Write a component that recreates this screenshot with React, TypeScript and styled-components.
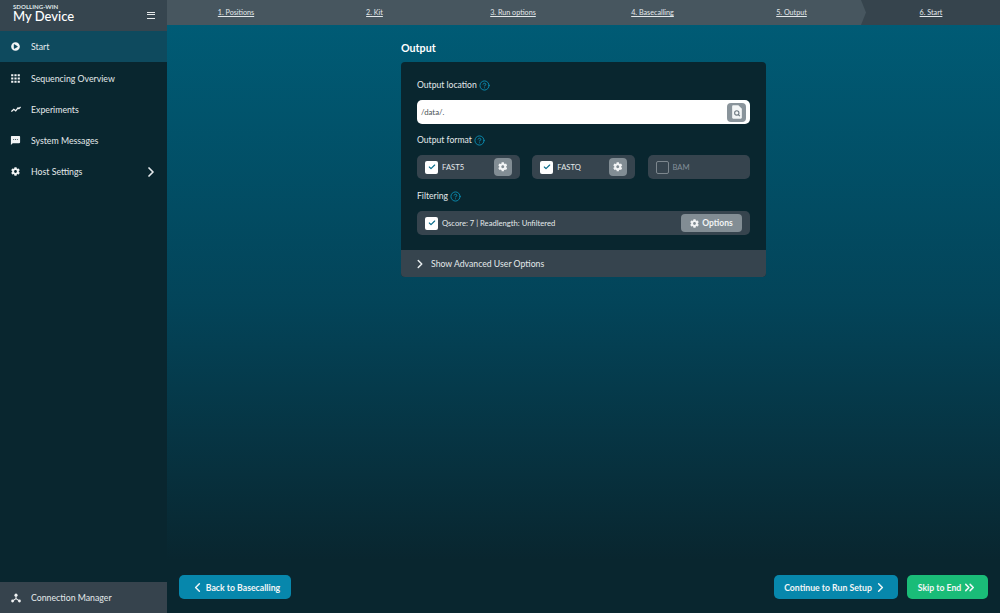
import styled, { createGlobalStyle } from "styled-components";
import { ChevronLeft, ChevronRight, ChevronsRight, CircleHelp, Check } from "lucide-react";
import { FaCog, FaPlayCircle } from "react-icons/fa";
import { MdApps, MdSms } from "react-icons/md";

const GlobalStyle = createGlobalStyle`
  html, body, #root {
    margin: 0;
    height: 100%;
  }
  body {
    font-family: Lato, "Open Sans", sans-serif;
    color: #e8edef;
    background: #09262f;
    overflow: hidden;
  }
  * { box-sizing: border-box; }
`;

const Page = styled.div`
  display: flex;
  width: 1000px;
  height: 613px;
`;

const Sidebar = styled.aside`
  width: 167px;
  flex: none;
  display: flex;
  flex-direction: column;
  background: #09262f;
`;

const DeviceHeader = styled.div`
  height: 31px;
  flex: none;
  display: flex;
  align-items: center;
  justify-content: space-between;
  padding: 0 12px 0 13px;
  background: #36454f;
`;

const DeviceName = styled.div`
  display: flex;
  flex-direction: column;
  margin-top: -5px;
  color: #fff;
  font-size: 13px;
  font-weight: 500;
  line-height: 13px;
  span {
    font-size: 6.1px;
    font-weight: 700;
    line-height: 7px;
    color: #dfe4e6;
  }
`;

const Burger = styled.div`
  position: relative;
  width: 8px;
  height: 7px;
  border-top: 1.5px solid #e6e9eb;
  border-bottom: 1.5px solid #e6e9eb;
  &::after {
    content: "";
    position: absolute;
    left: 0;
    right: 0;
    top: 1.3px;
    border-top: 1.5px solid #e6e9eb;
  }
`;

const NavItem = styled.div<{ $active?: boolean }>`
  height: 31.25px;
  flex: none;
  display: flex;
  align-items: center;
  padding: 0.5px 12px 0 11px;
  font-size: 8.75px;
  color: #e4e9eb;
  background: ${(p) => (p.$active ? "#0e4a5e" : "transparent")};
`;

const NavIcon = styled.span`
  width: 9px;
  height: 9px;
  flex: none;
  display: flex;
  align-items: center;
  justify-content: center;
  color: #f2f4f5;
  svg {
    flex: none;
  }
`;

const NavLabel = styled.span`
  margin-left: 11px;
  flex: 1;
`;

const NavChevron = styled(ChevronRight)`
  margin-right: -4px;
`;

const NavFooter = styled(NavItem)`
  margin-top: auto;
  height: 31px;
  background: #36434d;
`;

const Content = styled.main`
  flex: 1;
  min-width: 0;
  display: flex;
  flex-direction: column;
`;

const StepBar = styled.nav`
  height: 25px;
  flex: none;
  display: flex;
  background: #36444d;
`;

const Steps = styled.div`
  width: 699px;
  flex: none;
  display: flex;
  background: #47565f;
  clip-path: polygon(0 0, 694px 0, 699px 12.5px, 694px 25px, 0 25px);
`;

const Step = styled.a<{ $w: number }>`
  width: ${(p) => p.$w}px;
  flex: none;
  display: flex;
  justify-content: center;
  align-items: center;
  font-size: 7.2px;
  color: #e3e8ea;
  text-decoration: underline;
`;

const Body = styled.div`
  flex: 1;
  padding: 16px 234px 0;
  background: linear-gradient(180deg, #005b75 0%, #034459 52%, #09262f 100%);
`;

const Title = styled.h1`
  margin: 0 0 7px;
  height: 14px;
  font-size: 10.7px;
  line-height: 14px;
  font-weight: 700;
  color: #fff;
`;

const Card = styled.section`
  width: 365px;
  background: #09262f;
  border-radius: 4px;
  overflow: hidden;
`;

const CardBody = styled.div`
  padding: 16px 16px 15px;
  display: flex;
  flex-direction: column;
`;

const Label = styled.div<{ $mt?: number }>`
  display: flex;
  align-items: center;
  gap: 2px;
  height: 14px;
  margin-top: ${(p) => p.$mt ?? 0}px;
  margin-bottom: 8px;
  font-size: 8.6px;
  color: #e4e9eb;
  svg {
    width: 11px;
    height: 11px;
    color: #0b8fb5;
  }
`;

const PathInput = styled.div`
  height: 24px;
  display: flex;
  align-items: center;
  justify-content: space-between;
  padding: 0 4px;
  background: #fff;
  border-radius: 5px;
  font-size: 7.8px;
  color: #4a5257;
`;

const FileButton = styled.div`
  width: 19px;
  height: 19px;
  display: flex;
  align-items: center;
  justify-content: center;
  background: #8a949b;
  border-radius: 4px;
  svg {
    width: 12px;
    height: 14px;
  }
`;

const FormatRow = styled.div`
  display: grid;
  grid-template-columns: 102.5px 102.5px 102.5px;
  justify-content: space-between;
`;

const Tile = styled.div`
  height: 24px;
  display: flex;
  align-items: center;
  padding: 0 8px;
  background: #36444e;
  border-radius: 5px;
  font-size: 7.65px;
  color: #e4e9eb;
`;

const CheckBox = styled.div<{ $off?: boolean }>`
  width: 13px;
  height: 13px;
  flex: none;
  display: flex;
  align-items: center;
  justify-content: center;
  margin-right: 4px;
  border-radius: 2px;
  background: ${(p) => (p.$off ? "transparent" : "#fff")};
  border: ${(p) => (p.$off ? "1px solid #7d878e" : "none")};
  color: #0a6d8c;
  svg {
    width: 8px;
    height: 8px;
  }
`;

const TileLabel = styled.span<{ $off?: boolean }>`
  flex: 1;
  color: ${(p) => (p.$off ? "#85909a" : "#e4e9eb")};
`;

const GearButton = styled.div`
  width: 18px;
  height: 18px;
  display: flex;
  align-items: center;
  justify-content: center;
  background: #828d94;
  border-radius: 4px;
  color: #f2f4f5;
  svg {
    width: 9.5px;
    height: 9.5px;
  }
`;

const OptionsButton = styled.div`
  width: 61px;
  height: 18px;
  display: flex;
  align-items: center;
  justify-content: center;
  gap: 3px;
  background: #828d94;
  border-radius: 4px;
  font-size: 8.5px;
  font-weight: 700;
  color: #f2f4f5;
  svg {
    width: 9px;
    height: 9px;
  }
`;

const AdvancedBar = styled.div`
  height: 27px;
  display: flex;
  align-items: center;
  gap: 4px;
  padding-left: 12px;
  background: #36444e;
  font-size: 8.7px;
  color: #e4e9eb;
`;

const Footer = styled.footer`
  height: 53px;
  flex: none;
  display: flex;
  align-items: flex-start;
  padding: 15px 12px 0 12px;
  gap: 9px;
  background: #09262f;
`;

const ActionButton = styled.button<{ $green?: boolean; $w: number }>`
  width: ${(p) => p.$w}px;
  height: 24px;
  padding: 0;
  display: flex;
  align-items: center;
  justify-content: center;
  gap: 1px;
  border: 0;
  border-radius: 5px;
  background: ${(p) => (p.$green ? "#1abc78" : "#0787ac")};
  color: #f2f6f7;
  font-family: inherit;
  font-size: 8.7px;
  font-weight: 700;
`;

const Spacer = styled.div`
  flex: 1;
`;

const TrendIcon = () => (
  <svg width="10" height="9" viewBox="0 0 10 9" fill="none" stroke="currentColor" strokeWidth="1.3" aria-hidden="true">
    <path d="M.4 6.600l2.400-2.300 1.900 1.500L7 2.900l.9.7L9.600 2" />
  </svg>
);

const ConnectionIcon = () => (
  <svg width="10" height="10" viewBox="0 0 12 12" fill="currentColor" aria-hidden="true">
    <circle cx="6" cy="2.600" r="1.900" />
    <circle cx="1.900" cy="9.600" r="1.700" />
    <circle cx="10.100" cy="9.600" r="1.700" />
    <path d="M5.400 4h1.200v2.400l3.200 2.300-.7 1-3.100-2.200-3.100 2.200-.7-1 3.200-2.300z" />
  </svg>
);

const FileSearchIcon = () => (
  <svg viewBox="0 0 11 13" aria-hidden="true">
    <path d="M1 1.300C1 .7 1.400.3 2 .3h4.800L10 3.500V11.700c0 .6-.4 1-1 1H2c-.6 0-1-.4-1-1z" fill="#f4f6f7" />
    <circle cx="5.300" cy="7.400" r="2" fill="none" stroke="#6d7880" strokeWidth="1" />
    <path d="M6.700 8.900l1.500 1.500" stroke="#6d7880" strokeWidth="1" />
  </svg>
);

const Checked = () => (
  <CheckBox>
    <Check strokeWidth={3.5} />
  </CheckBox>
);

export default function App() {
  return (
    <Page>
      <GlobalStyle />
      <Sidebar>
        <DeviceHeader>
          <DeviceName>
            <span>SDOLLING-WIN</span>
            My Device
          </DeviceName>
          <Burger />
        </DeviceHeader>
        <NavItem $active>
          <NavIcon>
            <FaPlayCircle size={9} />
          </NavIcon>
          <NavLabel>Start</NavLabel>
        </NavItem>
        <NavItem>
          <NavIcon>
            <MdApps size={13} />
          </NavIcon>
          <NavLabel>Sequencing Overview</NavLabel>
        </NavItem>
        <NavItem>
          <NavIcon>
            <TrendIcon />
          </NavIcon>
          <NavLabel>Experiments</NavLabel>
        </NavItem>
        <NavItem>
          <NavIcon>
            <MdSms size={11} />
          </NavIcon>
          <NavLabel>System Messages</NavLabel>
        </NavItem>
        <NavItem>
          <NavIcon>
            <FaCog size={9} />
          </NavIcon>
          <NavLabel>Host Settings</NavLabel>
          <NavChevron size={16} strokeWidth={2.6} />
        </NavItem>
        <NavFooter>
          <NavIcon>
            <ConnectionIcon />
          </NavIcon>
          <NavLabel>Connection Manager</NavLabel>
        </NavFooter>
      </Sidebar>
      <Content>
        <StepBar>
          <Steps>
            <Step $w={138}>1. Positions</Step>
            <Step $w={139}>2. Kit</Step>
            <Step $w={138}>3. Run options</Step>
            <Step $w={141}>4. Basecalling</Step>
            <Step $w={137}>5. Output</Step>
          </Steps>
          <Step $w={130}>6. Start</Step>
        </StepBar>
        <Body>
          <Title>Output</Title>
          <Card>
            <CardBody>
              <Label>
                Output location <CircleHelp strokeWidth={2} />
              </Label>
              <PathInput>
                /data/.
                <FileButton>
                  <FileSearchIcon />
                </FileButton>
              </PathInput>
              <Label $mt={9}>
                Output format <CircleHelp strokeWidth={2} />
              </Label>
              <FormatRow>
                <Tile>
                  <Checked />
                  <TileLabel>FAST5</TileLabel>
                  <GearButton>
                    <FaCog />
                  </GearButton>
                </Tile>
                <Tile>
                  <Checked />
                  <TileLabel>FASTQ</TileLabel>
                  <GearButton>
                    <FaCog />
                  </GearButton>
                </Tile>
                <Tile>
                  <CheckBox $off />
                  <TileLabel $off>BAM</TileLabel>
                </Tile>
              </FormatRow>
              <Label $mt={10}>
                Filtering <CircleHelp strokeWidth={2} />
              </Label>
              <Tile>
                <Checked />
                <TileLabel>Qscore: 7 | Readlength: Unfiltered</TileLabel>
                <OptionsButton>
                  <FaCog />
                  Options
                </OptionsButton>
              </Tile>
            </CardBody>
            <AdvancedBar>
              <ChevronRight size={14} strokeWidth={2.6} />
              Show Advanced User Options
            </AdvancedBar>
          </Card>
        </Body>
        <Footer>
          <ActionButton $w={112}>
            <ChevronLeft size={15} strokeWidth={2.4} />
            Back to Basecalling
          </ActionButton>
          <Spacer />
          <ActionButton $w={124}>
            Continue to Run Setup
            <ChevronRight size={15} strokeWidth={2.4} />
          </ActionButton>
          <ActionButton $green $w={81}>
            Skip to End
            <ChevronsRight size={15} strokeWidth={2.4} />
          </ActionButton>
        </Footer>
      </Content>
    </Page>
  );
}
